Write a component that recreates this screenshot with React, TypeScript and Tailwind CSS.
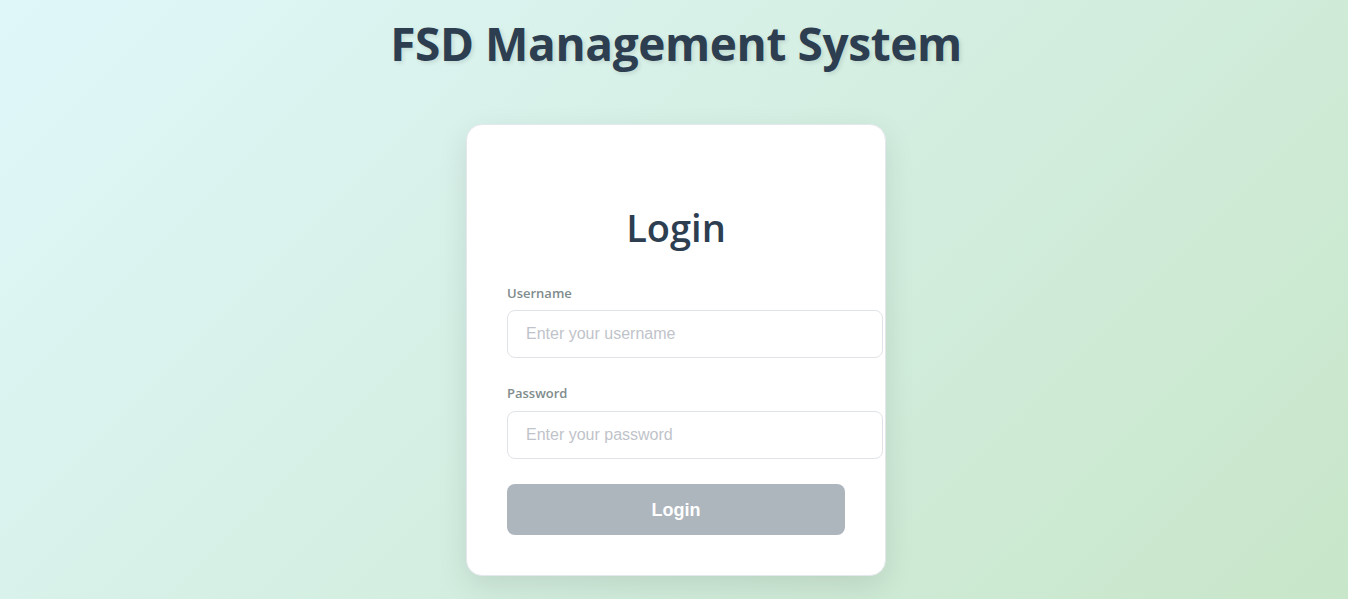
export default function App() {
  return (
    <main className="flex min-h-[599px] w-full flex-col items-center bg-[linear-gradient(135deg,#e0f7fa_0%,#c8e6c9_100%)] pl-1 font-['Open_Sans',sans-serif]">
      <h1 className="mt-[14px] text-[46px] leading-[58px] font-bold tracking-[-0.4px] text-[#2c3e50] [text-shadow:2px_2px_4px_rgba(0,0,0,0.1)]">
        FSD Management System
      </h1>
      <div className="mt-[52px] flex w-[420px] flex-col rounded-2xl border border-[#e4e8ec] bg-white px-10 pt-[78px] pb-10 shadow-[0_10px_30px_rgba(0,0,0,0.1)]">
        <h2 className="text-center text-[38px] leading-[48px] font-semibold text-[#2c3e50]">Login</h2>
        <div className="mt-[33px] flex flex-col">
          <label className="text-[13px] leading-[18px] font-semibold text-[#7f8c8d]">Username</label>
          <input
            type="text"
            placeholder="Enter your username"
            className="mt-[8px] box-border h-[48px] w-[376px] rounded-lg border border-[#e0e3e7] px-[18px] font-['Liberation_Sans',sans-serif] text-base text-[#2c3e50] outline-none placeholder:text-[#bfc3ca]"
          />
        </div>
        <div className="mt-[26px] flex flex-col">
          <label className="text-[13px] leading-[18px] font-semibold text-[#7f8c8d]">Password</label>
          <input
            type="password"
            placeholder="Enter your password"
            className="mt-[9px] box-border h-[48px] w-[376px] rounded-lg border border-[#e0e3e7] px-[18px] font-['Liberation_Sans',sans-serif] text-base text-[#2c3e50] outline-none placeholder:text-[#bfc3ca]"
          />
        </div>
        <button
          type="button"
          className="mt-[25px] h-[51px] w-full rounded-lg bg-[#adb5bd] font-['Liberation_Sans',sans-serif] text-lg font-bold text-white"
        >
          Login
        </button>
      </div>
    </main>
  );
}
